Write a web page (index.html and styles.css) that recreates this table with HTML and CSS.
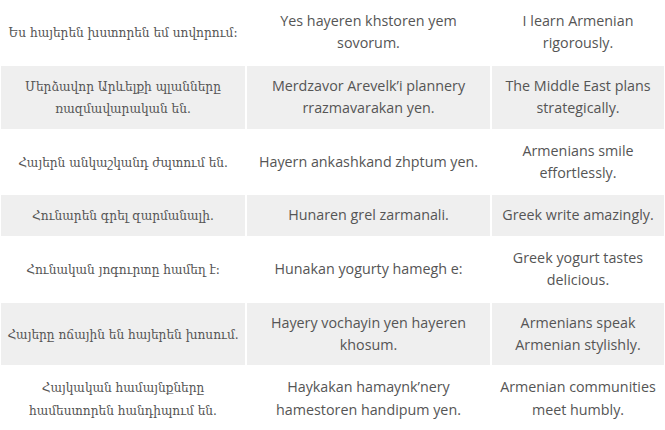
FILE: index.html
```html
<!DOCTYPE html>
<html>
<head>
<meta charset="utf-8">
<link rel="stylesheet" href="styles.css">
</head>
<body>
<table class="phrases">
  <colgroup><col class="c1"><col class="c2"><col class="c3"></colgroup>
  <tbody>
    <tr><td class="hy">Ես հայերեն խստորեն եմ սովորում:</td><td>Yes hayeren khstoren yem sovorum.</td><td>I learn Armenian rigorously.</td></tr>
    <tr><td class="hy">Մերձավոր Արևելքի պլանները ռազմավարական են.</td><td>Merdzavor Arevelk’i plannery rrazmavarakan yen.</td><td>The Middle East plans strategically.</td></tr>
    <tr><td class="hy">Հայերն անկաշկանդ ժպտում են.</td><td>Hayern ankashkand zhptum yen.</td><td>Armenians smile effortlessly.</td></tr>
    <tr><td class="hy">Հունարեն գրել զարմանալի.</td><td>Hunaren grel zarmanali.</td><td>Greek write amazingly.</td></tr>
    <tr><td class="hy">Հունական յոգուրտը համեղ է:</td><td>Hunakan yogurty hamegh e:</td><td>Greek yogurt tastes delicious.</td></tr>
    <tr><td class="hy">Հայերը ոճային են հայերեն խոսում.</td><td>Hayery vochayin yen hayeren khosum.</td><td>Armenians speak Armenian stylishly.</td></tr>
    <tr><td class="hy">Հայկական համայնքները համեստորեն հանդիպում են.</td><td>Haykakan hamaynk’nery hamestoren handipum yen.</td><td>Armenian communities meet humbly.</td></tr>
  </tbody>
</table>
</body>
</html>
```
FILE: styles.css
```css
html, body {
  margin: 0;
  padding: 0;
  background: #fff;
}
.phrases {
  border-collapse: separate;
  border-spacing: 0;
  width: 665px;
  table-layout: fixed;
  font-family: "Open Sans", sans-serif;
  font-size: 14.3px;
  line-height: 22.4px;
  color: #555;
}
.c1 { width: 246px; }
.c2 { width: 245px; }
.c3 { width: 174px; }
.phrases td {
  border: 1px solid #fff;
  padding: 9px 7px;
  text-align: center;
  vertical-align: middle;
}
.phrases .hy {
  font-family: "DejaVu Serif Condensed", "DejaVu Serif", serif;
  font-stretch: condensed;
  font-size: 13.5px;
  padding-left: 4px;
  padding-right: 4px;
}
.phrases tr:nth-child(even) td {
  background: #efefef;
}
```
